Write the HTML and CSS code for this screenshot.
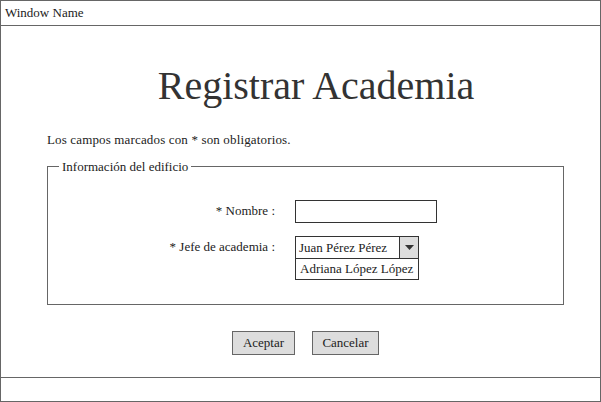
FILE: index.html
```html
<!DOCTYPE html>
<html>
<head>
<meta charset="utf-8">
<link rel="stylesheet" href="styles.css">
</head>
<body>
<div class="window">
  <div class="titlebar">Window Name</div>
  <div class="content">
    <h1 class="title">Registrar Academia</h1>
    <p class="note">Los campos marcados con * son obligatorios.</p>
    <fieldset class="group">
      <legend class="group-legend">Información del edificio</legend>
      <div class="row">
        <label class="label">* Nombre :</label>
        <div class="textbox"></div>
      </div>
      <div class="row">
        <label class="label">* Jefe de academia :</label>
        <div class="combo">
          <div class="combo-box">
            <span class="combo-value">Juan Pérez Pérez</span>
            <span class="combo-btn"><svg width="9" height="5" viewBox="0 0 9 5"><polygon points="0,0 9,0 4.5,5" fill="#333"/></svg></span>
          </div>
          <div class="combo-list">Adriana López López</div>
        </div>
      </div>
    </fieldset>
    <div class="actions">
      <button class="btn btn-ok">Aceptar</button>
      <button class="btn btn-cancel">Cancelar</button>
    </div>
  </div>
  <div class="statusbar"></div>
</div>
</body>
</html>
```
FILE: styles.css
```css
html, body {
  margin: 0;
  padding: 0;
  background: #fff;
}
body {
  font-family: "Liberation Serif", "Times New Roman", serif;
  font-size: 13px;
  color: #222;
}
.window {
  width: 601px;
  height: 402px;
  box-sizing: border-box;
  border: 1px solid #666;
  display: flex;
  flex-direction: column;
}
.titlebar {
  height: 24px;
  line-height: 24px;
  padding-left: 4px;
  border-bottom: 1px solid #666;
}
.content {
  flex: 1;
  padding: 0 36px 0 46px;
}
.title {
  margin: 37px 0 0 0;
  padding-left: 21px;
  text-align: center;
  font-size: 40px;
  font-weight: normal;
  line-height: 46px;
  color: #333;
}
.note {
  margin: 23px 0 0 0;
  line-height: 15px;
  letter-spacing: 0.15px;
}
.group {
  margin: 12px 0 0 0;
  padding: 26px 11px 24px 11px;
  border: 1px solid #666;
}
.group-legend {
  padding: 0 3px;
  line-height: 15px;
}
.row {
  display: flex;
  align-items: flex-start;
  gap: 20px;
}
.row + .row {
  margin-top: 13px;
}
.label {
  width: 216px;
  text-align: right;
  line-height: 22px;
}
.textbox {
  width: 140px;
  height: 21px;
  border: 1px solid #333;
}
.combo {
  width: 124px;
}
.combo-box {
  display: flex;
  height: 21px;
  border: 1px solid #333;
}
.combo-value {
  flex: 1;
  padding-left: 3px;
  line-height: 21px;
}
.combo-btn {
  width: 18px;
  background: #ddd;
  border-left: 1px solid #333;
  display: flex;
  align-items: center;
  justify-content: center;
}
.combo-list {
  height: 20px;
  line-height: 20px;
  padding-left: 4px;
  border: 1px solid #333;
  border-top: none;
}
.actions {
  display: flex;
  justify-content: center;
  gap: 17px;
  margin-top: 26px;
}
.btn {
  height: 24px;
  padding: 0;
  font-family: inherit;
  font-size: 13px;
  color: #222;
  background: #ddd;
  border: 1px solid #666;
  border-radius: 0;
}
.btn-ok {
  width: 63px;
}
.btn-cancel {
  width: 67px;
}
.statusbar {
  height: 23px;
  border-top: 1px solid #666;
}
```
